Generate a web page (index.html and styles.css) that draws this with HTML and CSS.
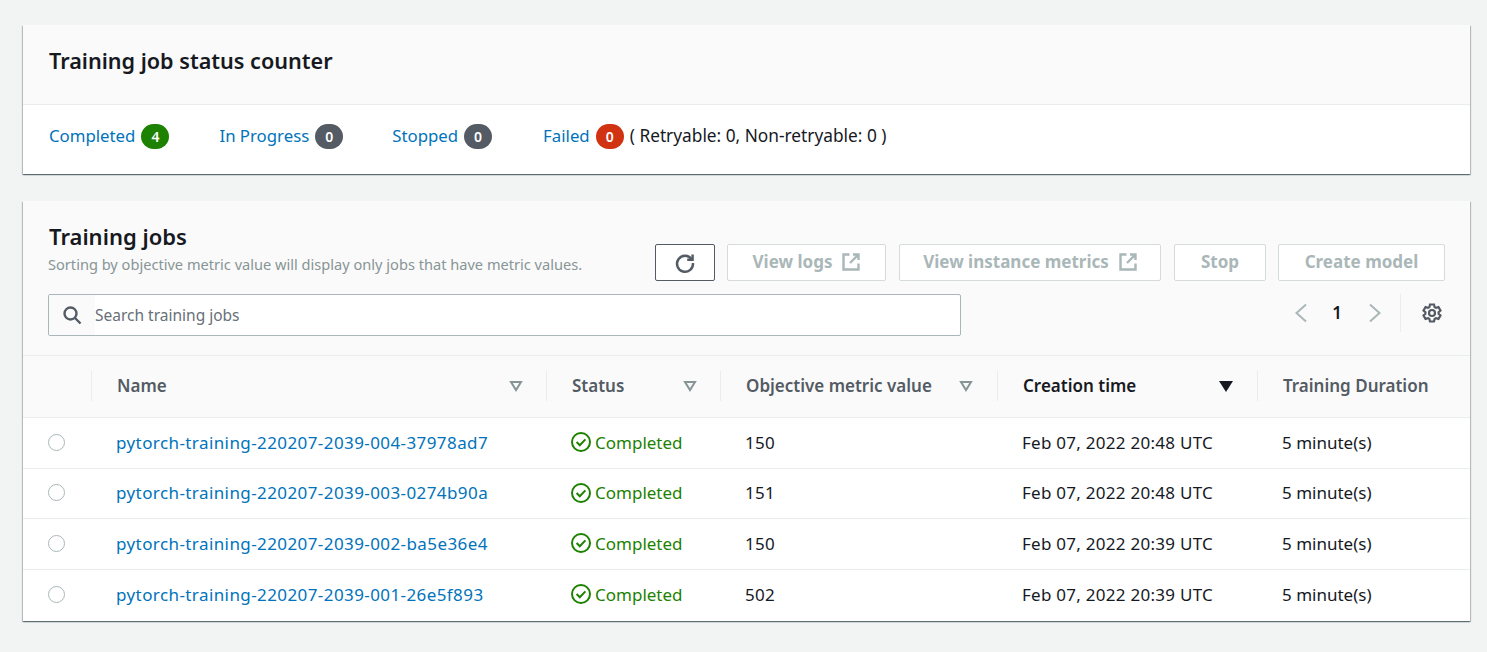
FILE: index.html
```html
<!DOCTYPE html>
<html lang="en">
<head>
    <meta charset="UTF-8">
    <title>Training jobs</title>
    <link rel="stylesheet" href="styles.css">
</head>
<body>

<section class="card counter-card">
    <div class="card-header counter-header">
        <h2 class="counter-title">Training job status counter</h2>
    </div>
    <div class="counters">
        <div class="counter"><a href="#">Completed</a><span class="pill green">4</span></div>
        <div class="counter"><a href="#">In Progress</a><span class="pill grey">0</span></div>
        <div class="counter"><a href="#">Stopped</a><span class="pill grey">0</span></div>
        <div class="counter"><a href="#">Failed</a><span class="pill red">0</span><span class="retry">( Retryable: 0, Non-retryable: 0 )</span></div>
    </div>
</section>

<section class="card jobs-card">
    <div class="card-header jobs-header">
        <div class="jobs-top">
            <div class="jobs-title">
                <h2>Training jobs</h2>
                <p>Sorting by objective metric value will display only jobs that have metric values.</p>
            </div>
            <div class="actions">
                <button class="btn refresh" aria-label="Refresh">
                    <svg width="22" height="22" viewBox="0 0 22 22" fill="none" stroke="#545b64" stroke-width="2.4"><path d="M17.6 7.2A8 8 0 1 0 19 11"/><path d="M18.6 2.4v5.4h-5.4"/></svg>
                </button>
                <button class="btn logs">View logs
                    <svg class="ext" width="18" height="18" viewBox="0 0 18 18" fill="none" stroke="#aab7b8" stroke-width="2.4"><path d="M7.5 1.5H1.5v15h15v-6"/><path d="M11 1.5h5.5V7M16.5 1.5L8 10"/></svg>
                </button>
                <button class="btn metrics">View instance metrics
                    <svg class="ext" width="18" height="18" viewBox="0 0 18 18" fill="none" stroke="#aab7b8" stroke-width="2.4"><path d="M7.5 1.5H1.5v15h15v-6"/><path d="M11 1.5h5.5V7M16.5 1.5L8 10"/></svg>
                </button>
                <button class="btn stop">Stop</button>
                <button class="btn create">Create model</button>
            </div>
        </div>
        <div class="tools">
            <div class="search">
                <span class="search-icon">
                    <svg width="20" height="20" viewBox="0 0 20 20" fill="none" stroke="#545b64" stroke-width="2.4"><circle cx="8.5" cy="8.5" r="6"/><path d="M13 13l5.5 5.5"/></svg>
                </span>
                <span class="search-text">Search training jobs</span>
            </div>
            <div class="pager">
                <svg width="12" height="20" viewBox="0 0 12 20" fill="none" stroke="#aab7b8" stroke-width="2"><path d="M11 1.5L1.5 10l9.5 8.5"/></svg>
                <span class="page-num">1</span>
                <svg width="12" height="20" viewBox="0 0 12 20" fill="none" stroke="#aab7b8" stroke-width="2"><path d="M1 1.5L10.5 10 1 18.5"/></svg>
            </div>
            <div class="settings">
                <svg width="20" height="20" viewBox="0 0 20 20" fill="none" stroke="#545b64" stroke-width="2.2"><path d="M8 1.5h4l.6 2.6 1.4.8 2.5-.8 2 3.4-1.9 1.8v1.4l1.9 1.8-2 3.4-2.5-.8-1.4.8-.6 2.6H8l-.6-2.6-1.4-.8-2.5.8-2-3.4 1.9-1.8V9.3L1.5 7.5l2-3.4 2.5.8 1.4-.8z"/><circle cx="10" cy="10" r="3"/></svg>
            </div>
        </div>
    </div>

    <table class="jobs">
        <colgroup>
            <col class="c-radio"><col class="c-name"><col class="c-status"><col class="c-metric"><col class="c-time"><col class="c-dur">
        </colgroup>
        <thead>
            <tr>
                <th></th>
                <th><div class="th-in tight">Name <svg class="sort" width="14" height="12" viewBox="0 0 14 12" fill="none" stroke="#879596" stroke-width="2"><path d="M2 2h10L7 10z"/></svg></div></th>
                <th><div class="th-in tight">Status <svg class="sort" width="14" height="12" viewBox="0 0 14 12" fill="none" stroke="#879596" stroke-width="2"><path d="M2 2h10L7 10z"/></svg></div></th>
                <th><div class="th-in">Objective metric value <svg class="sort" width="14" height="12" viewBox="0 0 14 12" fill="none" stroke="#879596" stroke-width="2"><path d="M2 2h10L7 10z"/></svg></div></th>
                <th class="sorted"><div class="th-in">Creation time <svg class="sort" width="14" height="12" viewBox="0 0 14 12" fill="#16191f"><path d="M0 1h14L7 12z"/></svg></div></th>
                <th><div class="th-in">Training Duration</div></th>
            </tr>
        </thead>
        <tbody>
            <tr>
                <td><span class="radio"></span></td>
                <td><a class="job-link" href="#">pytorch-training-220207-2039-004-37978ad7</a></td>
                <td><span class="ok"><svg width="20" height="20" viewBox="0 0 20 20" fill="none" stroke="#1d8102" stroke-width="2"><circle cx="10" cy="10" r="9"/><path d="M5.6 10l3.2 3.2 5.6-5.8"/></svg>Completed</span></td>
                <td class="num">150</td>
                <td class="num">Feb 07, 2022 20:48 UTC</td>
                <td>5 minute(s)</td>
            </tr>
            <tr>
                <td><span class="radio"></span></td>
                <td><a class="job-link" href="#">pytorch-training-220207-2039-003-0274b90a</a></td>
                <td><span class="ok"><svg width="20" height="20" viewBox="0 0 20 20" fill="none" stroke="#1d8102" stroke-width="2"><circle cx="10" cy="10" r="9"/><path d="M5.6 10l3.2 3.2 5.6-5.8"/></svg>Completed</span></td>
                <td class="num">151</td>
                <td class="num">Feb 07, 2022 20:48 UTC</td>
                <td>5 minute(s)</td>
            </tr>
            <tr>
                <td><span class="radio"></span></td>
                <td><a class="job-link" href="#">pytorch-training-220207-2039-002-ba5e36e4</a></td>
                <td><span class="ok"><svg width="20" height="20" viewBox="0 0 20 20" fill="none" stroke="#1d8102" stroke-width="2"><circle cx="10" cy="10" r="9"/><path d="M5.6 10l3.2 3.2 5.6-5.8"/></svg>Completed</span></td>
                <td class="num">150</td>
                <td class="num">Feb 07, 2022 20:39 UTC</td>
                <td>5 minute(s)</td>
            </tr>
            <tr>
                <td><span class="radio"></span></td>
                <td><a class="job-link" href="#">pytorch-training-220207-2039-001-26e5f893</a></td>
                <td><span class="ok"><svg width="20" height="20" viewBox="0 0 20 20" fill="none" stroke="#1d8102" stroke-width="2"><circle cx="10" cy="10" r="9"/><path d="M5.6 10l3.2 3.2 5.6-5.8"/></svg>Completed</span></td>
                <td class="num">502</td>
                <td class="num">Feb 07, 2022 20:39 UTC</td>
                <td>5 minute(s)</td>
            </tr>
        </tbody>
    </table>
</section>

</body>
</html>
```

FILE: styles.css
```css
html, body {
    margin: 0;
    height: 100%;
    overflow: hidden;
}

body {
    font-family: "Noto Sans", Arial, sans-serif;
    font-size: 17px;
    color: #16191f;
    background-color: #f2f3f3;
    padding: 25px 17px 0 23px;
    box-sizing: border-box;
}

a {
    color: #0073bb;
    text-decoration: none;
}

h2 {
    margin: 0 0 0 1px;
    font-size: 22px;
    line-height: 28px;
    font-weight: 600;
}

.counter-title {
    font-size: 21.6px;
}

.card {
    background-color: #fff;
    box-sizing: border-box;
    box-shadow: 0 1px 1px 0 rgba(0, 28, 36, 0.4), 1px 1px 1px 0 rgba(0, 28, 36, 0.2), -1px 1px 1px 0 rgba(0, 28, 36, 0.2);
}

.card-header {
    background-color: #fafafa;
    border-bottom: 1px solid #eaeded;
    box-sizing: border-box;
}

.counter-card {
    height: 149px;
    margin-bottom: 27px;
}

.counter-header {
    height: 80px;
    padding: 22px 25px 0;
}

.counters {
    display: flex;
    align-items: center;
    height: 62px;
    padding: 0 26px;
    font-size: 16.8px;
}

.counter {
    display: flex;
    align-items: center;
    margin-right: 49px;
}

.counter:nth-child(2) {
    margin-left: 1px;
}

.counter:last-child {
    margin-left: 2px;
}

.counter a, .retry {
    padding-bottom: 2px;
}

.pill {
    display: inline-block;
    height: 25px;
    line-height: 25px;
    padding: 0 10px;
    margin-left: 6px;
    border-radius: 13px;
    font-size: 14px;
    font-weight: 600;
    color: #fff;
}

.pill.green { background-color: #1d8102; }
.pill.grey { background-color: #545b64; }
.pill.red { background-color: #d13212; }

.retry {
    margin-left: 6px;
    font-size: 17.3px;
}

.jobs-card {
    height: 420px;
}

.jobs-header {
    height: 155px;
    padding: 21px 25px 0;
}

.jobs-top {
    display: flex;
    justify-content: space-between;
}

.jobs-title p {
    margin: 5px 0 0;
    font-size: 14.6px;
    line-height: 18px;
    color: #879596;
}

.actions {
    display: flex;
    gap: 12px;
    margin-top: 22px;
}

.btn {
    display: flex;
    align-items: center;
    justify-content: center;
    height: 37px;
    padding: 0 0 2px;
    font-family: inherit;
    font-size: 17px;
    font-weight: 700;
    color: #aab7b8;
    background-color: #fff;
    border: 1px solid #d5dbdb;
    border-radius: 2px;
    box-sizing: border-box;
}

.btn .ext {
    margin-left: 10px;
}

.refresh {
    width: 60px;
    padding: 0;
    border-color: #545b64;
}

.logs { width: 159px; }
.metrics { width: 262px; margin-left: 1px; }
.stop { width: 92px; margin-left: 1px; }
.create { width: 167px; }

.tools {
    display: flex;
    align-items: flex-start;
    margin-top: 13px;
}

.search {
    display: flex;
    align-items: center;
    width: 913px;
    height: 42px;
    background-color: #fff;
    border: 1px solid #aab7b8;
    border-radius: 2px;
    box-sizing: border-box;
}

.search-icon {
    display: flex;
    align-items: center;
    justify-content: center;
    width: 46px;
    height: 100%;
    background-color: #fafafa;
}

.search-text {
    font-size: 15.5px;
    color: #687078;
}

.pager {
    display: flex;
    align-items: center;
    height: 38px;
    margin-left: auto;
    gap: 25px;
    padding-right: 19px;
}

.page-num {
    margin-right: 2px;
    padding-bottom: 2px;
    font-weight: 600;
    font-size: 17px;
}

.settings {
    display: flex;
    align-items: center;
    height: 38px;
    padding: 0 3px 0 21px;
    border-left: 1px solid #eaeded;
}

.jobs {
    width: 100%;
    border-collapse: collapse;
    table-layout: fixed;
}

.c-radio { width: 68px; }
.c-name { width: 455px; }
.c-status { width: 174px; }
.c-metric { width: 277px; }
.c-time { width: 260px; }

.jobs th {
    height: 59px;
    padding: 0 0 2px;
    background-color: #fafafa;
    border-bottom: 1px solid #eaeded;
    font-size: 17px;
    font-weight: 600;
    text-align: left;
    color: #545b64;
}

.jobs th.sorted {
    color: #16191f;
}

.th-in {
    display: flex;
    align-items: center;
    justify-content: space-between;
    height: 30px;
    padding: 0 24px 0 25px;
    border-left: 1px solid #eaeded;
}

.th-in.tight {
    padding-right: 23px;
}

.jobs td {
    height: 48px;
    padding: 0 0 2px 25px;
    border-bottom: 1px solid #eaeded;
}

.jobs tr:nth-child(2) td {
    height: 47px;
}

.jobs tr:last-child td {
    border-bottom: none;
}

.job-link {
    letter-spacing: 0.41px;
}

.num {
    letter-spacing: 0.27px;
}

.radio {
    display: block;
    width: 15px;
    height: 15px;
    border: 1.5px solid #aab7b8;
    border-radius: 50%;
}

.ok {
    display: flex;
    align-items: center;
    gap: 4px;
    color: #1d8102;
}
```
